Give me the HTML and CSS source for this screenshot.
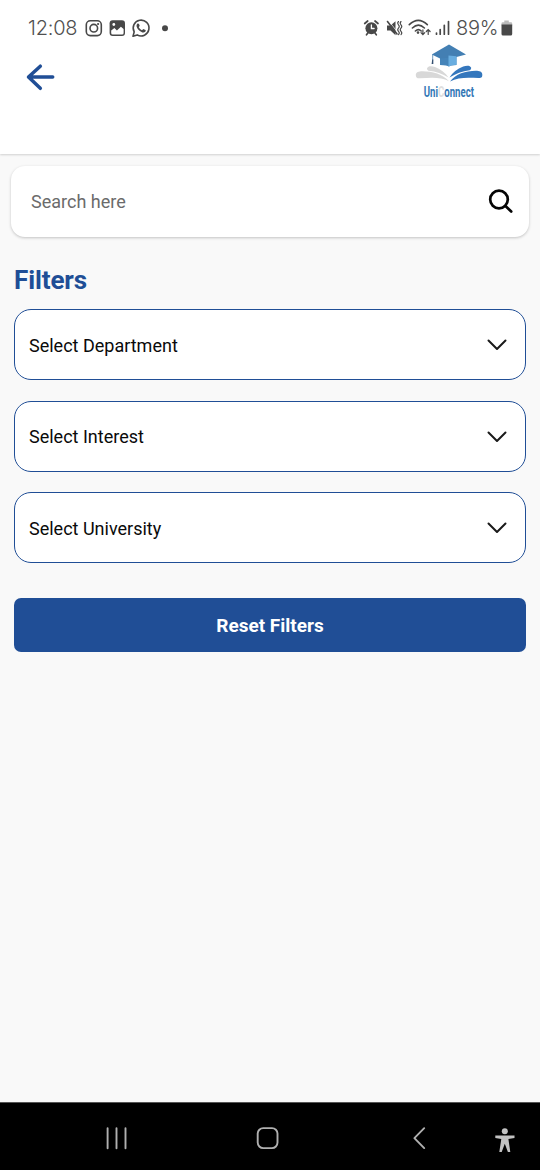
FILE: index.html
```html
<!DOCTYPE html>
<html lang="en">
<head>
<meta charset="utf-8">
<title>UniConnect</title>
<link rel="stylesheet" href="styles.css">
</head>
<body>
<div class="screen">
  <header class="header">
    <div class="status">
      <span class="clock">12:08</span>
      <svg class="notifications" width="90" height="24" viewBox="82 16 90 24">
        <g fill="none" stroke="#484848" stroke-width="1.6">
          <rect x="86.3" y="20.8" width="15" height="14.8" rx="4"/>
          <circle cx="93.8" cy="28.2" r="3.8"/>
          <path d="M133 36.2l1.2-4.3a7.9 7.9 0 1 1 3 3z" stroke-linejoin="round"/>
        </g>
        <circle cx="98.1" cy="24" r="1.1" fill="#484848"/>
        <rect x="109.6" y="20.3" width="15.4" height="15.6" rx="3" fill="#484848"/>
        <path d="M111.2 30.5l3.2-2.5 2.5 2.5 4-3.8 2.7 2.3v4q0 1.5-1.5 1.5h-9.400q-1.500 0-1.500-1.500z" fill="#fff"/>
        <circle cx="113.8" cy="24.5" r="1.4" fill="#fff"/>
        <path d="M137.3 23.7c.7-.6 1.5-.3 1.8.5l.6 1.5-.9 1.5c.8 1.4 1.8 2.3 3.2 3l1.3-1.2 2.2 1.1c.5.4.2 1.5-.6 2-1.6 1.1-4.2-.2-6.2-2.2-1.8-1.9-3-4.6-1.4-6.2z" fill="#484848"/>
        <circle cx="165" cy="28.3" r="3" fill="#484848"/>
      </svg>
      <svg class="indicators" width="92" height="24" viewBox="362 16 92 24">
        <g fill="none" stroke="#484848" stroke-linecap="round">
          <path d="M364.700 23.500l3-2.500M378 23.500l-3-2.500M366.500 34.800l1.500-2M376.300 34.800l-1.500-2" stroke-width="1.700"/>
          <circle cx="371.400" cy="28.300" r="6" fill="#484848" stroke="none"/>
          <path d="M371.400 25v3.500h2.700" stroke="#fff" stroke-width="1.300"/>
          <path d="M387 25.500h3.500l5-4.300v14l-5-4.600H387z" fill="#484848" stroke="none"/>
          <path d="M388.700 20.700l8 10.500" stroke="#fff" stroke-width=".7"/>
          <path d="M387.500 21.500l9.500 12.500" stroke-width="1.600"/>
          <path d="M398.500 21.500q-1.600 1.600 0 3.300t0 3.300 0 3.300 0 3.300M401 21.500q-1.600 1.600 0 3.300t0 3.300 0 3.300 0 3.300" stroke-width="1.100"/>
          <path d="M409.300 24.700q9-8.600 18 0M412.400 28q6-5.600 12 0M415.400 31q3-2.600 5.800 0" stroke-width="1.600"/>
          <circle cx="418" cy="32.600" r="1.300" fill="#484848" stroke="none"/>
          <path d="M422.900 29.800v4.700m-1.900-1.800 1.900 2 1.900-2M428.200 34.500v-5m-1.900 2 1.900-2 1.900 2" stroke-width="1.200"/>
          <path d="M436.500 33v1.200M440.200 29.500v4.700M444.300 25.300v8.900M448.500 21.500v12.700" stroke-width="1.700"/>
        </g>
      </svg>
      <span class="charge">89%</span>
      <svg width="14" height="24" viewBox="500 16 14 24">
        <path d="M504.300 20.500h4.500v1.700h2.200q1.200 0 1.200 1.200v2h-10.700v-2q0-1.200 1.200-1.200h1.600z" fill="#bbb"/>
        <path d="M501.500 24.500h10.700v9.600q0 1.500-1.500 1.500H503q-1.500 0-1.500-1.500z" fill="#484848"/>
      </svg>
    </div>
    <div class="toolbar">
      <svg class="back" width="30" height="30" viewBox="25 62 30 30">
        <path d="M52.700 77H29M40.300 66.200L28.500 77l11.800 11.300" fill="none" stroke="#204e96" stroke-width="3.500" stroke-linecap="round" stroke-linejoin="round"/>
      </svg>
      <svg class="logo" width="70" height="58" viewBox="414 42 70 58">
        <path d="M440 55v10q7 .2 9 1.500 2-1.500 7.500-1.500V55z" fill="#4584b9"/>
        <path d="M431.800 54.400L449 44.600l17 9.800-9.500 2.600L440 58.500z" fill="#437fb3"/>
        <path d="M448.500 55.500l8 .8v8.400q-5.500 0-8 2z" fill="#68ade0"/>
        <path d="M432.700 54.500v6" stroke="#4d7fab" stroke-width=".8"/>
        <path d="M432.200 59.500h1.100v4.500h-1.700z" fill="#344f70"/>
        <g fill="#d8d8d8">
          <path d="M427 68.300c1-2.800 5-2.500 8-1.200 6 2.500 10.500 5.700 13.500 10.400-6-3.800-12.500-6-20-6.800q-1.700-.5-1.500-2.400z"/>
          <path d="M415.800 75c0-3 3-3.800 6.500-3.800 10 0 20.500 2.700 26.700 10.100-8-4.500-18-3.500-29-3-3.200.1-4.200-.6-4.200-3.300z"/>
        </g>
        <g fill="#3477bd">
          <path d="M471.200 67.800c-1-2.800-5-2.500-8-1.200-6 2.500-10.700 6.100-13.700 10.900 6-3.900 12.700-6.500 20.200-7.300q1.700-.5 1.500-2.400z"/>
          <path d="M482.300 74.500c0-3-3-3.800-6.500-3.800-10 0-20.500 3.300-25.800 10.800 8-4.500 17.500-4 28.500-3.500 3.200.1 3.800-.6 3.800-3.500z"/>
        </g>
        <text class="brand" transform="translate(423.700 96.800) scale(.54 1)" textLength="93" lengthAdjust="spacingAndGlyphs">Uni<tspan class="brand-pale">C</tspan>onnect</text>
      </svg>
    </div>
  </header>
  <main class="content">
    <div class="search">
      <span>Search here</span>
      <svg width="28" height="28" viewBox="487 188 28 28">
        <g fill="none" stroke="#050505" stroke-width="2.700" stroke-linecap="round">
          <circle cx="499" cy="199.500" r="8.800"/>
          <path d="M505.500 206l5.700 5.500"/>
        </g>
      </svg>
    </div>
    <h1 class="title">Filters</h1>
    <div class="filters">
      <div class="select"><span>Select Department</span><svg class="chevron" viewBox="0 0 20 12"><path d="M1.500 1.500L10 10l8.500-8.500"/></svg></div>
      <div class="select"><span>Select Interest</span><svg class="chevron" viewBox="0 0 20 12"><path d="M1.500 1.500L10 10l8.500-8.500"/></svg></div>
      <div class="select"><span>Select University</span><svg class="chevron" viewBox="0 0 20 12"><path d="M1.500 1.500L10 10l8.500-8.500"/></svg></div>
    </div>
    <button class="reset">Reset Filters</button>
  </main>
  <nav class="navbar">
    <svg width="540" height="68" viewBox="0 1102 540 68">
      <g fill="none" stroke="#b0b0b0" stroke-width="1.900" stroke-linecap="round">
        <path d="M107.600 1128.300v20M116.500 1128.300v20M125.500 1128.300v20"/>
        <rect x="257.700" y="1128.100" width="19.800" height="20" rx="5.500"/>
        <path d="M424.200 1128.200l-9.800 9.900 9.800 10" stroke-linejoin="round"/>
      </g>
      <g fill="#c2c2c2">
        <circle cx="504.800" cy="1131.200" r="3"/>
        <path d="M495.300 1135.500h19.200v2.400l-6.100 1 1.900 13.100h-2.400l-3.100-8.200-3.100 8.200h-2.400l2-13.100-6-1z"/>
      </g>
    </svg>
  </nav>
</div>
</body>
</html>
```
FILE: styles.css
```css
* { box-sizing: border-box; }
body { margin: 0; font-family: Roboto, sans-serif; }
svg { display: block; flex: none; }
.screen {
  width: 540px;
  height: 1170px;
  display: flex;
  flex-direction: column;
  background: #f9f9f9;
}
.header {
  height: 154px;
  background: #fff;
  box-shadow: 0 1px 2px rgba(0, 0, 0, .16);
}
.status {
  height: 42px;
  padding: 16px 26px 0 28px;
  display: flex;
  align-items: flex-start;
  color: #505050;
  font-family: Inter, sans-serif;
  font-size: 20px;
  font-weight: 350;
  line-height: 24px;
}
.clock { width: 54px; letter-spacing: -.2px; }
.indicators { margin-left: auto; }
.charge { width: 46px; padding-left: 2px; letter-spacing: -.3px; }
.toolbar {
  padding: 0 56px 0 25px;
  display: flex;
  justify-content: space-between;
}
.back { margin-top: 20px; }
.brand {
  font-family: Roboto, sans-serif;
  font-size: 14.5px;
  font-weight: 700;
  fill: #3478b6;
}
.brand-pale { fill: #dedede; }
.content {
  flex: 1;
  padding: 12px 14px 0;
}
.search {
  height: 71px;
  margin: 0 -3px;
  padding: 0 14px 0 20px;
  display: flex;
  align-items: center;
  justify-content: space-between;
  border-radius: 14px;
  background: #fff;
  box-shadow: 0 1px 3px rgba(0, 0, 0, .22);
  color: #6b6b6b;
  font-size: 18px;
}
.title {
  margin: 27px 0 13px;
  color: #204e96;
  font-size: 26px;
  font-weight: 700;
  line-height: 32px;
  letter-spacing: -.1px;
}
.filters {
  display: flex;
  flex-direction: column;
  gap: 20.5px;
}
.select {
  height: 71px;
  padding: 1px 18px 0 14px;
  display: flex;
  align-items: center;
  justify-content: space-between;
  border: 1.5px solid #204e96;
  border-radius: 17px;
  background: #fff;
  color: #0a0a0a;
  font-size: 18px;
}
.chevron {
  width: 20px;
  height: 12px;
  fill: none;
  stroke: #1a1a1a;
  stroke-width: 2;
  stroke-linecap: round;
  stroke-linejoin: round;
}
.reset {
  display: block;
  width: 100%;
  height: 54px;
  margin-top: 35px;
  padding: 0;
  border: 0;
  border-radius: 7px;
  background: #204e96;
  color: #fff;
  font: 700 19px Roboto, sans-serif;
}
.navbar {
  height: 68px;
  background: #000;
  border-top: 1px solid #555;
}
.navbar svg { margin-top: -1px; }
```
